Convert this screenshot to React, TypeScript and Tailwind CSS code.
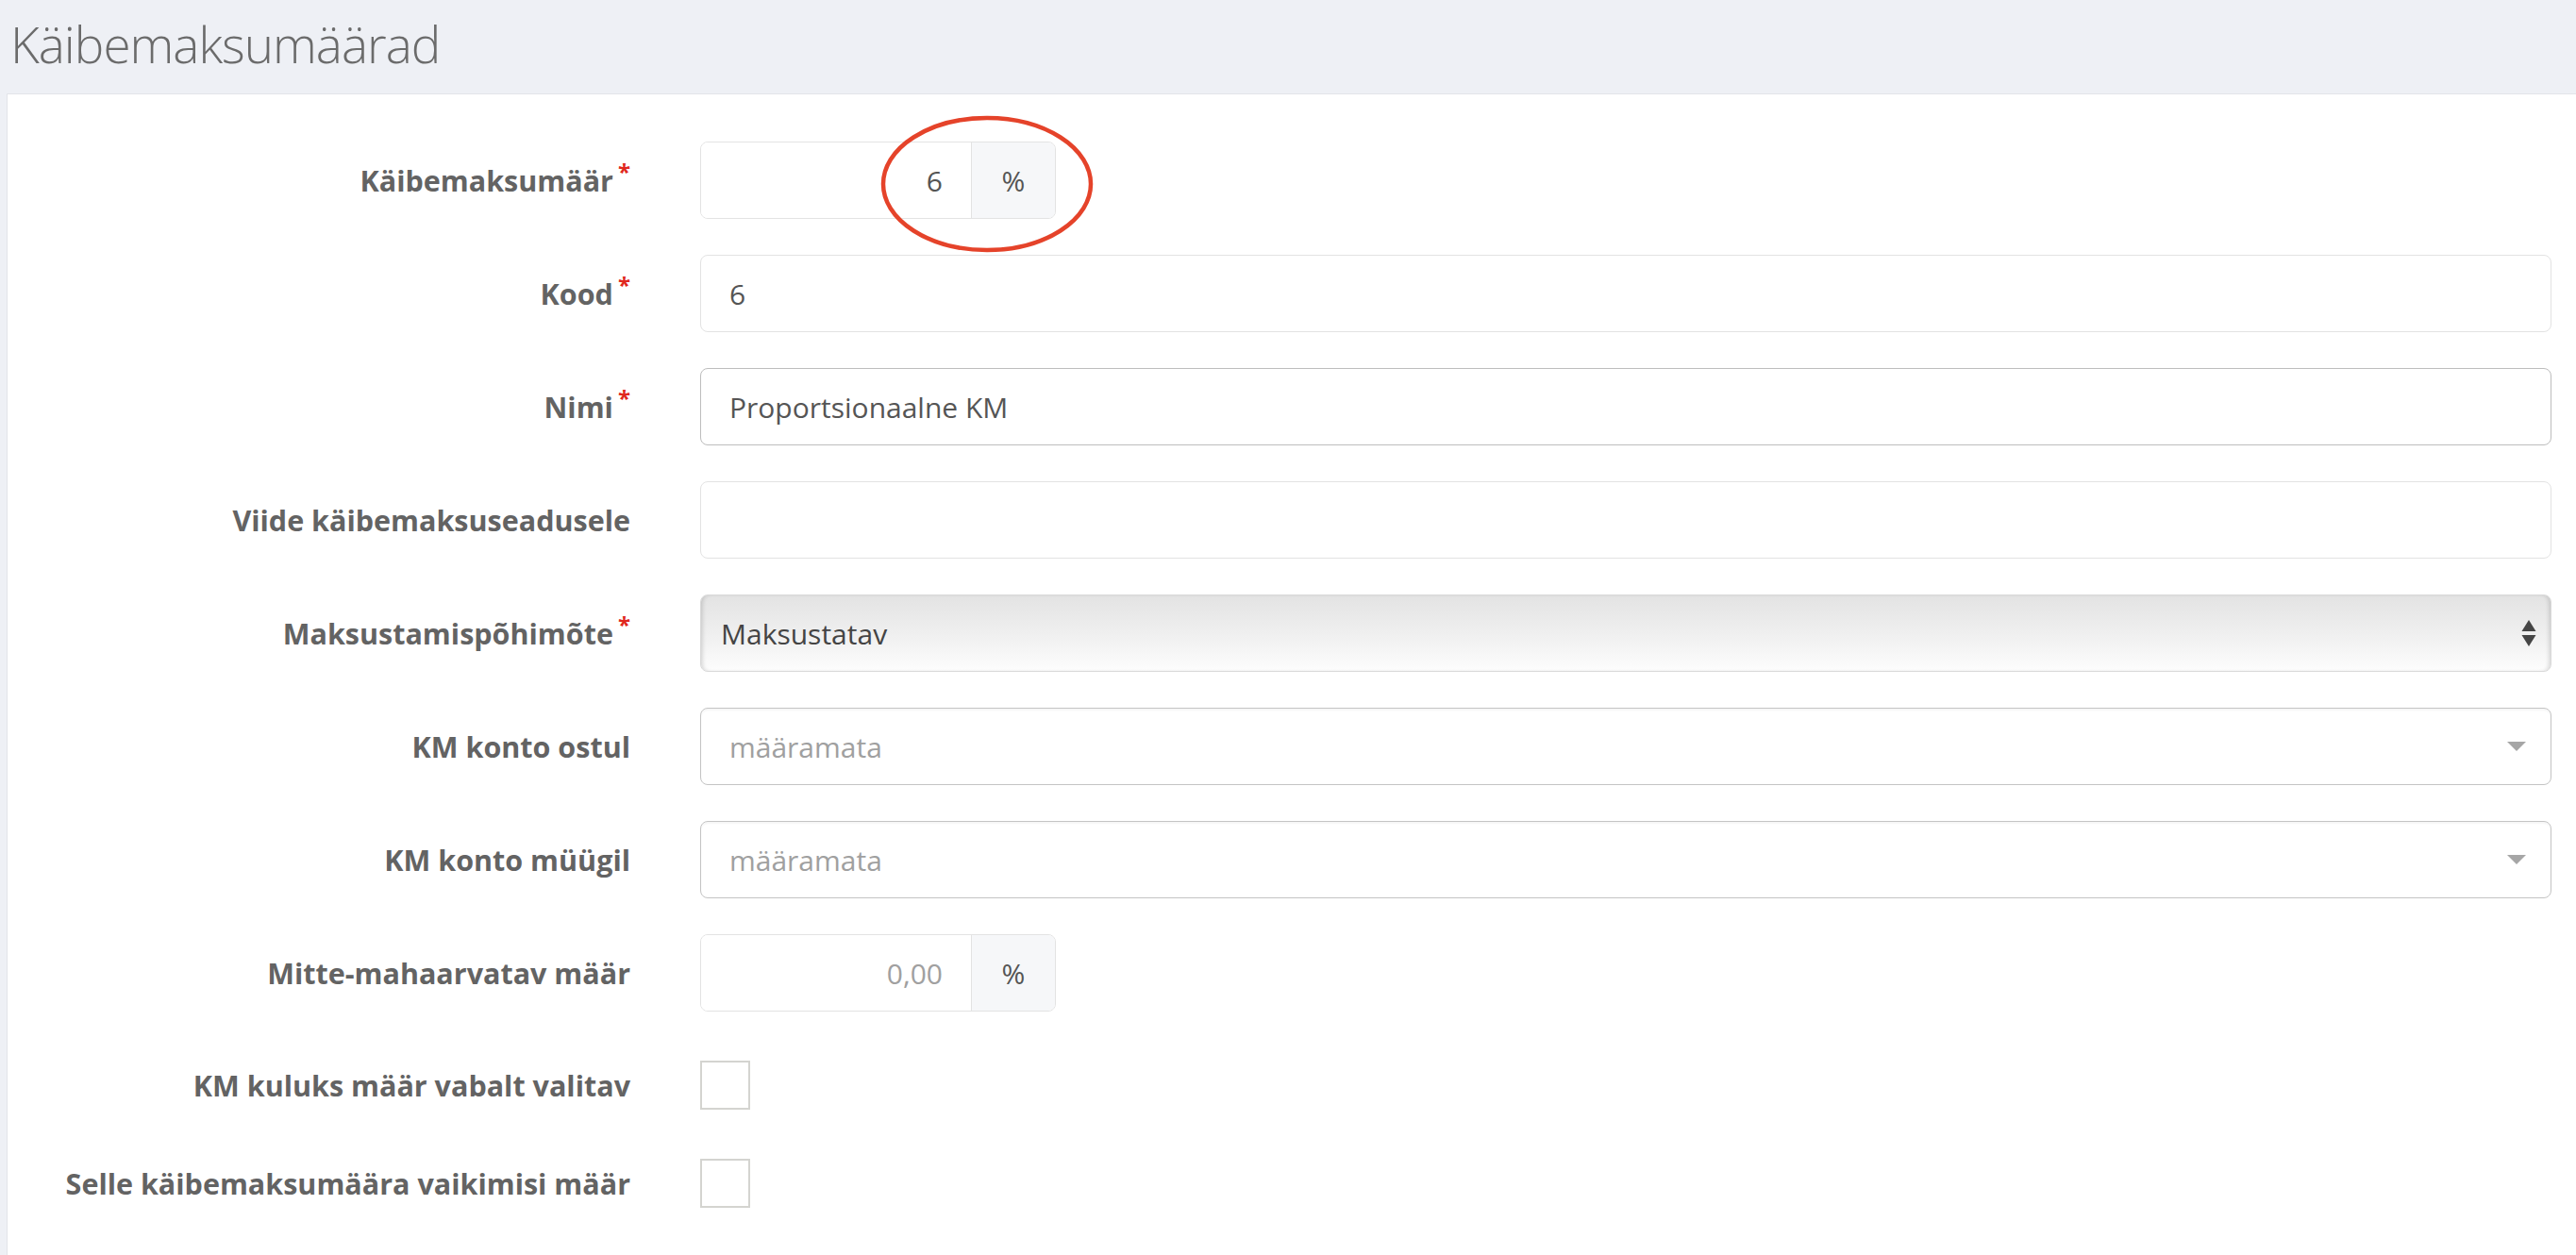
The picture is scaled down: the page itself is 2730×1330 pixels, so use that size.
import type { ReactNode } from 'react';

// Label column on the left of every form row
interface FieldLabelProps {
  text: string;
  required?: boolean;
}

const FieldLabel = ({ text, required = false }: FieldLabelProps) => {
  return (
    <div className="w-[660px] shrink-0 text-right text-[30.5px] font-bold text-[#636363] leading-none">
      {text}
      {required && <span className="text-[#e0281e] text-[24px] align-top ml-[5px] relative -top-[6px]">*</span>}
    </div>
  );
};

interface FormRowProps {
  label: string;
  required?: boolean;
  className?: string;
  children: ReactNode;
}

const FormRow = ({ label, required, className = '', children }: FormRowProps) => {
  return (
    <div className={`flex items-center ${className}`}>
      <FieldLabel text={label} required={required} />
      <div className="ml-[74px] flex-1 mr-[26px]">{children}</div>
    </div>
  );
};

// Input with a "%" addon on the right
const PercentInput = ({ value, placeholder }: { value?: string; placeholder?: string }) => {
  return (
    <div className="flex h-[82px] w-[377px] rounded-[8px] border border-[#e3e3e3] overflow-hidden">
      <div className="flex-1 flex items-center justify-end pr-[30px] text-[30px] bg-white">
        {value ? <span className="text-[#555555]">{value}</span> : <span className="text-[#a0a0a0]">{placeholder}</span>}
      </div>
      <div className="w-[89px] border-l border-[#e3e3e3] bg-[#f6f7f9] flex items-center justify-center text-[30px] text-[#555555]">
        %
      </div>
    </div>
  );
};

const TextInput = ({ value, focused = false }: { value?: string; focused?: boolean }) => {
  return (
    <div
      className={`h-[82px] rounded-[8px] border bg-white flex items-center pl-[30px] text-[30px] text-[#555555] ${
        focused ? 'border-[#bdbdbd]' : 'border-[#e3e3e3]'
      }`}
    >
      {value}
    </div>
  );
};

const NativeSelect = ({ value }: { value: string }) => {
  return (
    <div className="h-[82px] rounded-[8px] border border-[#d9d9d9] bg-gradient-to-b from-[#e3e3e3] via-[#efefef] to-[#fdfdfd] shadow-[inset_4px_0_5px_-3px_rgba(0,0,0,0.18),inset_-4px_0_5px_-3px_rgba(0,0,0,0.18)] flex items-center pl-[21px] pr-[14px] text-[30px] text-[#444444]">
      <span className="flex-1">{value}</span>
      <svg width="16" height="32" viewBox="0 0 16 32" className="mr-[1px]">
        <path d="M8 2 L15.5 14 L0.5 14 Z" fill="#454545" />
        <path d="M0.5 18 L15.5 18 L8 30 Z" fill="#454545" />
      </svg>
    </div>
  );
};

const Select2Box = ({ placeholder }: { placeholder: string }) => {
  return (
    <div className="h-[82px] rounded-[8px] border border-[#c4c4c4] bg-white shadow-[inset_0_2px_2px_rgba(0,0,0,0.04)] flex items-center pl-[30px] pr-[26px] text-[30px] text-[#a0a0a0]">
      <span className="flex-1">{placeholder}</span>
      <svg width="20" height="10" viewBox="0 0 20 10">
        <path d="M0 0 L20 0 L10 10 Z" fill="#a6a6a6" />
      </svg>
    </div>
  );
};

const Checkbox = () => {
  return <div className="w-[53px] h-[52px] border-2 border-[#d4d4d0] bg-white" />;
};

const App = () => {
  return (
    <div className="min-h-screen bg-[#eef0f5] font-['Open_Sans',sans-serif]">
      <div className="h-[99px] flex items-center pl-[11px]">
        <h1 className="text-[53px] font-light text-[#6b6b6b] tracking-[-1px] leading-none -mt-[6px]">Käibemaksumäärad</h1>
      </div>

      <div className="relative ml-[7px] min-h-[1231px] bg-white border-l border-t border-[#e2e4e9] pt-[50px]">
        <FormRow label="Käibemaksumäär" required>
          <PercentInput value="6" />
        </FormRow>
        <FormRow label="Kood" required className="mt-[38px]">
          <TextInput value="6" />
        </FormRow>
        <FormRow label="Nimi" required className="mt-[38px]">
          <TextInput value="Proportsionaalne KM" focused />
        </FormRow>
        <FormRow label="Viide käibemaksuseadusele" className="mt-[38px]">
          <TextInput />
        </FormRow>
        <FormRow label="Maksustamispõhimõte" required className="mt-[38px]">
          <NativeSelect value="Maksustatav" />
        </FormRow>
        <FormRow label="KM konto ostul" className="mt-[38px]">
          <Select2Box placeholder="määramata" />
        </FormRow>
        <FormRow label="KM konto müügil" className="mt-[38px]">
          <Select2Box placeholder="määramata" />
        </FormRow>
        <FormRow label="Mitte-mahaarvatav määr" className="mt-[38px]">
          <PercentInput placeholder="0,00" />
        </FormRow>
        <FormRow label="KM kuluks määr vabalt valitav" className="mt-[52px]">
          <Checkbox />
        </FormRow>
        <FormRow label="Selle käibemaksumäära vaikimisi määr" className="mt-[52px]">
          <Checkbox />
        </FormRow>

        {/* red highlight ring around the rate value */}
        <svg className="absolute left-[919px] top-[15px] pointer-events-none" width="250" height="160" viewBox="0 0 250 160">
          <ellipse cx="119" cy="80" rx="110" ry="70" fill="none" stroke="#e5432a" strokeWidth="4.5" />
        </svg>
      </div>
    </div>
  );
};

export default App;
